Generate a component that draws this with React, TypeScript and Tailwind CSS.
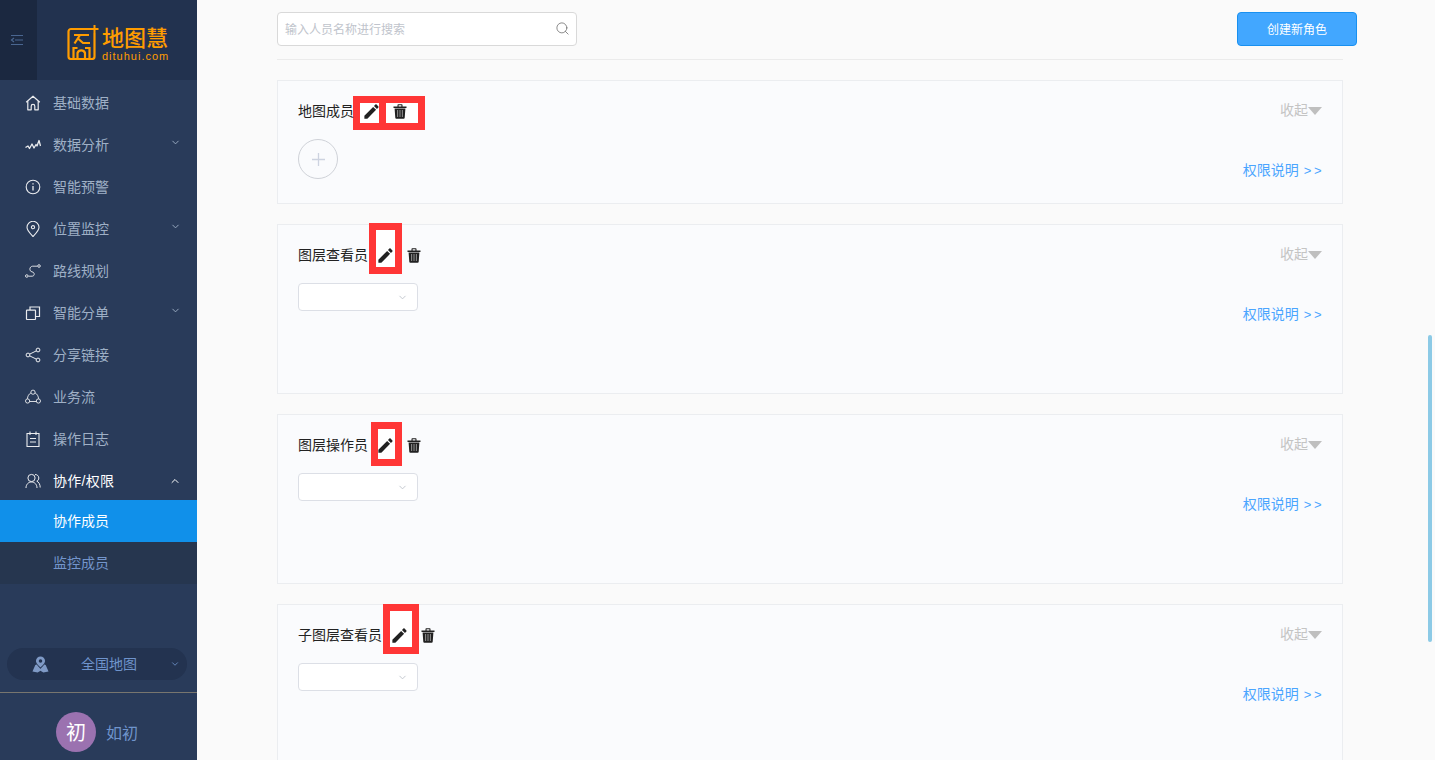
import React from "react";
import { ChevronDown, ChevronUp, Search } from "lucide-react";

const font = "font-['Liberation_Sans','Noto_Sans_CJK_SC',sans-serif]";

const HomeIcon = () => (
  <svg width="16" height="16" viewBox="0 0 16 16" fill="none" stroke="currentColor" strokeWidth="1.2">
    <path d="M1.200 7.200 8 1.200l6.800 6M2.800 6v8.800h3.400v-3.600a1.800 1.800 0 0 1 3.600 0v3.600h3.400V6" strokeLinejoin="round" />
  </svg>
);
const PulseIcon = () => (
  <svg width="16" height="16" viewBox="0 0 16 16" fill="none" stroke="currentColor" strokeWidth="1.3">
    <path d="M0.500 10.500 3 9l1.500 2.500L7 7l2 4 2-3.500 1 1.500 2-5.500 1.500 5.500" strokeLinejoin="round" />
  </svg>
);
const InfoIcon = () => (
  <svg width="16" height="16" viewBox="0 0 16 16" fill="none" stroke="currentColor" strokeWidth="1.1">
    <circle cx="8" cy="8" r="6.800" />
    <path d="M8 7v4.400M8 4.200v1.400" strokeWidth="1.300" />
  </svg>
);
const PinIcon = () => (
  <svg width="16" height="16" viewBox="0 0 16 16" fill="none" stroke="currentColor" strokeWidth="1.100">
    <path d="M8 15.500C5.200 12.500 2 9.600 2 6.300a6 6 0 0 1 12 0c0 3.300-3.200 6.200-6 9.200Z" strokeLinejoin="round" />
    <circle cx="8" cy="6.200" r="1.600" />
  </svg>
);
const RouteIcon = () => (
  <svg width="16" height="16" viewBox="0 0 16 16" fill="none" stroke="currentColor" strokeWidth="0.900">
    <circle cx="1.800" cy="13" r="1.300" />
    <circle cx="14" cy="3" r="1.300" />
    <path d="M3.500 13.200h3.700c2.600 0 2.800-4-.2-4.400C4 8.400 4.200 3.500 7.500 3.200h4.800" />
  </svg>
);
const CopyIcon = () => (
  <svg width="16" height="16" viewBox="0 0 16 16" fill="none" stroke="currentColor" strokeWidth="1.200">
    <rect x="1.500" y="5.200" width="9" height="9.300" rx="0.500" />
    <path d="M5 5V2h9.500v9.500H10.800" />
  </svg>
);
const ShareIcon = () => (
  <svg width="16" height="16" viewBox="0 0 16 16" fill="none" stroke="currentColor" strokeWidth="1">
    <circle cx="3" cy="8" r="1.900" />
    <circle cx="13" cy="3" r="1.900" />
    <circle cx="13" cy="13" r="1.900" />
    <path d="m4.700 7.100 6.600-3.200M4.700 8.900l6.600 3.200" />
  </svg>
);
const FlowIcon = () => (
  <svg width="16" height="16" viewBox="0 0 16 16" fill="none" stroke="currentColor" strokeWidth="0.900">
    <circle cx="8" cy="3.200" r="2.100" />
    <circle cx="2.600" cy="12" r="2.100" />
    <circle cx="13.400" cy="12" r="2.100" />
    <path d="M6 3.800C3.800 5 2.600 7.300 2.400 9.800M10 3.800c2.200 1.200 3.400 3.500 3.600 6M4.800 12.500h6.400" />
  </svg>
);
const LogIcon = () => (
  <svg width="16" height="16" viewBox="0 0 16 16" fill="none" stroke="currentColor" strokeWidth="1.100">
    <path d="M2 2.500h12v13H2zM5 0.500v3.500M11 0.500v3.500M5 7.500h6M5 11h6" />
  </svg>
);
const UserIcon = () => (
  <svg width="16" height="16" viewBox="0 0 16 16" fill="none" stroke="currentColor" strokeWidth="1">
    <circle cx="6.500" cy="5" r="3.600" />
    <path d="M1 15c0-3.500 2.300-6 5.500-6s5.500 2.500 5.500 6M10 1.500c2.400 0 3.800 1.600 3.800 3.500 0 1.500-.8 2.600-2 3.200 2 .7 3.400 3.300 3.400 6.300" />
  </svg>
);
const CollapseIcon = () => (
  <svg width="14" height="12" viewBox="0 0 14 12" fill="none" stroke="#4a6690" strokeWidth="1.200">
    <path d="M1 1.500h12M5 6h8M1 10.500h12M4 4 1.500 6 4 8" />
  </svg>
);
const MapIcon = () => (
  <svg width="17" height="17" viewBox="0 0 18 18" fill="#7f9ac6">
    <path d="M9 0.500a4.800 4.800 0 0 0-4.800 4.800C4.200 8.400 9 12 9 12s4.800-3.600 4.800-6.700A4.800 4.800 0 0 0 9 0.500Zm0 6.700a1.900 1.900 0 1 1 0-3.800 1.900 1.900 0 0 1 0 3.800Z" />
    <path d="M3.500 9.500 0.500 16.500l5.500 1 3-2 3 2 5.500-1-3-7-1.500-.6C11.500 10.800 9 13.500 9 13.500S6.500 10.800 5 8.900Z" />
  </svg>
);

const Logo = () => (
  <svg width="33" height="40" viewBox="0 0 33 40" fill="none" stroke="#ff9c00" strokeWidth="2.200" className="shrink-0">
    <path d="M24 9H4a2.500 2.500 0 0 0-2.500 2.500v25A2.500 2.500 0 0 0 4 39h21a2.500 2.500 0 0 0 2.500-2.500V13" strokeLinejoin="round" />
    <path d="M7 15h15M13 15 7.500 23.500M11.500 19l4.500 4h7M6.500 39V28h4M18 28h4.500v11M10.500 39v-6a4 4 0 0 1 7.500 0v6" />
    <path d="M27.500 5v8M23.500 9h8" strokeWidth="2" />
  </svg>
);

const Pencil = () => (
  <svg width="19" height="19" viewBox="0 0 24 24" fill="#212121">
    <path d="M3 17.250V21h3.750L17.810 9.940l-3.750-3.750L3 17.250zM20.710 7.040c.39-.39.39-1.020 0-1.410l-2.340-2.340c-.39-.39-1.020-.39-1.410 0l-1.830 1.830 3.750 3.750 1.830-1.830z" />
  </svg>
);
const Trash = () => (
  <svg width="14" height="15" viewBox="0 0 14 15">
    <path d="M0.500 2.500h13v1.500h-13zM4.500 2.500V1a.7.7 0 0 1 .7-.7h3.600a.7.7 0 0 1 .7.7v1.500H8.400V1.300H5.600v1.200Z" fill="#212121" />
    <path d="M1.600 4.500h10.800l-.7 9.300a1 1 0 0 1-1 .9H3.300a1 1 0 0 1-1-.9Z" fill="#212121" />
    <path d="M4.600 6v7M7 6v7M9.400 6v7" stroke="#8a8a8a" strokeWidth="1.100" />
  </svg>
);

type MenuItem = { label: string; icon: React.ReactNode; arrow?: boolean };

const menu: MenuItem[] = [
  { label: "基础数据", icon: <HomeIcon /> },
  { label: "数据分析", icon: <PulseIcon />, arrow: true },
  { label: "智能预警", icon: <InfoIcon /> },
  { label: "位置监控", icon: <PinIcon />, arrow: true },
  { label: "路线规划", icon: <RouteIcon /> },
  { label: "智能分单", icon: <CopyIcon />, arrow: true },
  { label: "分享链接", icon: <ShareIcon /> },
  { label: "业务流", icon: <FlowIcon /> },
  { label: "操作日志", icon: <LogIcon /> },
];

const Sidebar = () => (
  <aside className="w-[197px] h-full shrink-0 flex flex-col bg-[#293b5a]">
    <div className="h-[80px] flex bg-[#22324f]">
      <div className="w-[37px] bg-[#1b2840] flex items-center justify-center pr-[4px]">
        <CollapseIcon />
      </div>
      <div className="flex items-center pl-[30px] gap-[2px]">
        <Logo />
        <div className="text-[#ff9c00] leading-none pt-[10px]">
          <div className="text-[22px] font-medium">地图慧</div>
          <div className="text-[11px] tracking-[1px] mt-[1px]">dituhui.com</div>
        </div>
      </div>
    </div>

    <nav>
      {menu.map((m) => (
        <div key={m.label} className="h-[42px] pt-1 pl-[25px] pr-[16px] flex items-center text-[#9fb0c6] text-sm">
          <span className="w-[28px] text-white/90">{m.icon}</span>
          <span>{m.label}</span>
          {m.arrow && <ChevronDown size={11} className="ml-auto mb-[6px] text-[#9fb0c6]" />}
        </div>
      ))}
      <div className="h-[42px] pt-1 pl-[25px] pr-[16px] flex items-center text-white text-sm">
        <span className="w-[28px] text-white/90"><UserIcon /></span>
        <span className="tracking-[0.3px]">协作/权限</span>
        <ChevronUp size={12} className="ml-auto" />
      </div>
      <div className="h-[42px] bg-[#1090ea] flex items-center pl-[53px] text-white text-sm">协作成员</div>
      <div className="h-[42px] bg-[#26364f] flex items-center pl-[53px] text-[#7395cb] text-sm">监控成员</div>
    </nav>

    <div className="mt-auto ml-[7px] mr-[10px] mb-[12px] h-[32px] rounded-full bg-[#233350] flex items-center pl-[25px] pr-[7px] text-[#6f94cc] text-sm">
      <MapIcon />
      <span className="ml-[32px]">全国地图</span>
      <ChevronDown size={10} className="ml-auto" />
    </div>
    <div className="h-[68px] border-t border-[#78766f] flex items-start pl-[56px] pt-[19px]">
      <div className="w-10 h-10 pt-[1px] rounded-full bg-[#9b72b0] text-white text-xl flex items-center justify-center">初</div>
      <span className="ml-[10px] text-base text-[#6f94cc] leading-[44px]">如初</span>
    </div>
  </aside>
);

type Role = {
  name: string;
  add?: boolean;
  mark?: React.ReactNode;
};

const Mark = ({ className }: { className: string }) => (
  <div className={`absolute border-[7px] border-[#ff3636] bg-white ${className}`} />
);

const RoleCard = ({ name, add, mark }: Role) => (
  <section className={`relative shrink-0 mb-5 mr-[14px] border border-[#ebedf0] bg-[#fafbfd] px-5 ${add ? "h-[124px]" : "h-[170px]"}`}>
    {mark}
    <div className="relative flex items-center h-5 mt-5 text-sm text-[#222]">
      <span>{name}</span>
      <span className="ml-[8px] w-[19px] flex justify-center"><Pencil /></span>
      <span className="ml-[12px] flex justify-center"><Trash /></span>
      <span className="ml-auto text-[#c4c4c4] flex items-center mb-[2px]">
        收起
        <span className="w-0 h-0 mt-[2px] border-x-[7px] border-x-transparent border-t-[8px] border-t-[#bfbfbf]" />
      </span>
    </div>
    {add ? (
      <div className="relative mt-[18px] w-10 h-10 rounded-full border border-[#cfd2d8] flex items-center justify-center">
        <svg width="13" height="13" viewBox="0 0 13 13" stroke="#cdd3e0" strokeWidth="1.300"><path d="M6.500 0v13M0 6.500h13" /></svg>
      </div>
    ) : (
      <div className="relative mt-[18px] w-[120px] h-7 rounded border border-[#dcdfe6] bg-white flex items-center justify-end pr-[9px]">
        <ChevronDown size={11} className="text-[#c0c4cc]" />
      </div>
    )}
    <div className="absolute right-5 top-[79px] text-sm text-[#4aa5ff] whitespace-nowrap">
      权限说明<span className="ml-[5px] text-[13px] tracking-[2.500px] -mr-[2px]">&gt;&gt;</span>
    </div>
  </section>
);

export default function App() {
  return (
    <div className={`${font} w-[1435px] h-[760px] flex overflow-hidden bg-[#fafafa] relative`}>
      <Sidebar />
      <main className="flex-1 min-w-0 pl-[80px] pr-[78px] flex flex-col">
        <div className="pt-3 pb-[13px] flex items-center justify-between border-b border-[#ebebeb] mr-[14px] shrink-0">
          <div className="w-[300px] h-[34px] rounded border border-[#d9d9d9] bg-white flex items-center pl-[7px] pr-[6px]">
            <span className="text-xs text-[#c0c4cc] pt-[2px]">输入人员名称进行搜索</span>
            <Search size={15} strokeWidth={1.200} className="ml-auto text-[#666] mb-[2px]" />
          </div>
          <button className="w-[120px] h-[34px] pt-[2px] -mr-[14px] rounded border border-[#1890f0] bg-[#42a7ff] text-white text-xs">创建新角色</button>
        </div>
        <div className="mt-5 flex flex-col">
          <RoleCard
            name="地图成员"
            add
            mark={
              <>
                <Mark className="left-[75px] top-[15px] w-[28px] h-[34px] border-r-0" />
                <Mark className="left-[101px] top-[15px] w-[46px] h-[34px]" />
              </>
            }
          />
          <RoleCard name="图层查看员" mark={<Mark className="left-[91px] top-[-2px] w-[33px] h-[51px]" />} />
          <RoleCard name="图层操作员" mark={<Mark className="left-[93px] top-[7px] w-[31px] h-[44px]" />} />
          <RoleCard name="子图层查看员" mark={<Mark className="left-[105px] top-[-1px] w-[36px] h-[50px]" />} />
        </div>
      </main>
      <div className="absolute right-[3px] top-[335px] w-1 h-[307px] rounded-sm bg-[#8ccae6]" />
    </div>
  );
}
